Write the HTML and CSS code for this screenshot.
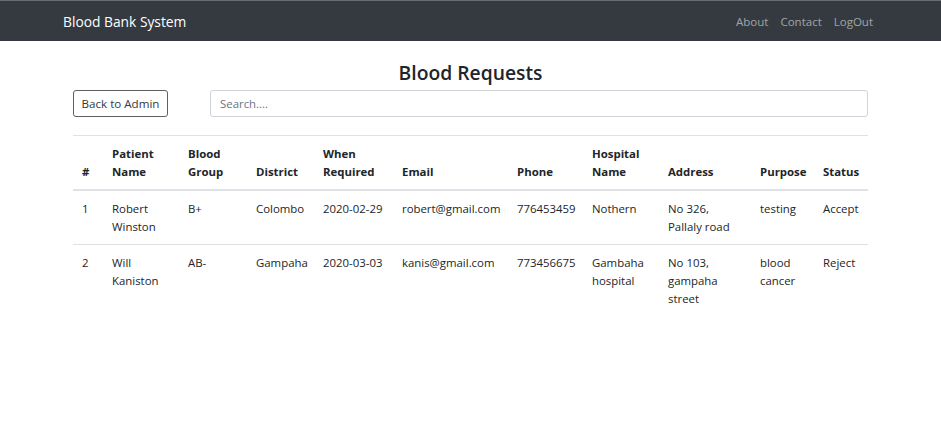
FILE: index.html
```html
<!DOCTYPE html>
<html>
<head>
<meta charset="utf-8">
<link rel="stylesheet" href="styles.css">
</head>
<body>
<nav class="navbar">
  <span class="brand">Blood Bank System</span>
  <ul class="nav">
    <li><a href="#">About</a></li>
    <li><a href="#">Contact</a></li>
    <li><a href="#">LogOut</a></li>
  </ul>
</nav>
<main class="container">
  <h1 class="title">Blood Requests</h1>
  <div class="toolbar">
    <button class="btn">Back to Admin</button>
    <input class="search" type="text" placeholder="Search....">
  </div>
  <table class="table">
    <colgroup>
      <col style="width:30px"><col style="width:76px"><col style="width:68px"><col style="width:67px"><col style="width:79px"><col style="width:115px"><col style="width:75px"><col style="width:76px"><col style="width:92px"><col style="width:63px"><col style="width:54px">
    </colgroup>
    <thead>
      <tr>
        <th>#</th><th>Patient Name</th><th>Blood Group</th><th>District</th><th>When Required</th><th>Email</th><th>Phone</th><th>Hospital Name</th><th>Address</th><th>Purpose</th><th>Status</th>
      </tr>
    </thead>
    <tbody>
      <tr>
        <td>1</td><td>Robert Winston</td><td>B+</td><td>Colombo</td><td class="nowrap">2020-02-29</td><td>robert@gmail.com</td><td>776453459</td><td>Nothern</td><td>No 326, Pallaly road</td><td>testing</td><td>Accept</td>
      </tr>
      <tr>
        <td>2</td><td>Will Kaniston</td><td>AB-</td><td>Gampaha</td><td class="nowrap">2020-03-03</td><td>kanis@gmail.com</td><td>773456675</td><td>Gambaha hospital</td><td>No 103, gampaha street</td><td>blood cancer</td><td>Reject</td>
      </tr>
    </tbody>
  </table>
</main>
</body>
</html>
```
FILE: styles.css
```css
* { box-sizing: border-box; }
html, body { margin: 0; padding: 0; }
body {
  font-family: "Open Sans", "Noto Sans", sans-serif;
  font-size: 11.4px;
  line-height: 18px;
  color: #212529;
  background: #fff;
}
.navbar {
  height: 41px;
  background: #343a40;
  border-top: 1px solid #6a6d71;
  display: flex;
  align-items: center;
  justify-content: space-between;
  padding: 0 62px 0 63px;
}
.brand {
  color: #fff;
  font-size: 13.8px;
  line-height: 20px;
  padding-top: 2px;
}
.nav {
  list-style: none;
  display: flex;
  margin: 0;
  padding: 0;
  padding-top: 2px;
}
.nav a {
  display: block;
  padding: 0 6px;
  color: rgba(255,255,255,.55);
  text-decoration: none;
  font-size: 11.5px;
}
.container {
  width: 795px;
  margin: 0 auto;
}
.title {
  margin: 0;
  padding-top: 19px;
  text-align: center;
  font-size: 19.3px;
  line-height: 26px;
  font-weight: 600;
}
.toolbar {
  display: flex;
  gap: 42px;
  margin-top: 4px;
  height: 27px;
}
.btn {
  font-family: inherit;
  font-size: 11.6px;
  color: #343a40;
  background: #fff;
  border: 1px solid #5d6166;
  border-radius: 3px;
  width: 95px;
  height: 27px;
  padding: 0;
  line-height: 25px;
}
.search {
  flex: 1;
  font-family: inherit;
  font-size: 11.4px;
  height: 27px;
  border: 1px solid #ced4da;
  border-radius: 3px;
  padding: 0 9px;
  color: #495057;
}
.search::placeholder { color: #6c757d; }
.table {
  width: 795px;
  margin-top: 18px;
  border-collapse: collapse;
  table-layout: fixed;
}
.table th, .table td {
  padding: 9px 9px 8px;
  text-align: left;
  vertical-align: top;
  border-top: 1px solid #dee2e6;
}
.table th {
  vertical-align: bottom;
  font-weight: 700;
  border-bottom: 2px solid #dee2e6;
}
.nowrap { white-space: nowrap; }
```
